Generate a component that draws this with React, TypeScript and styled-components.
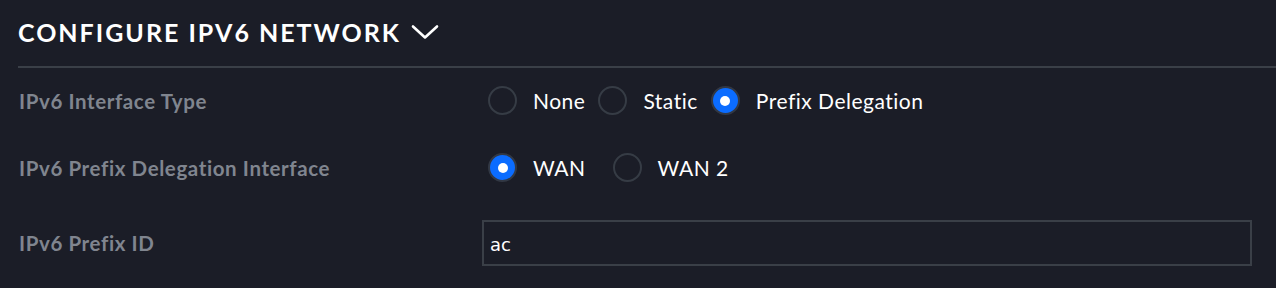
import React from "react";
import styled, { createGlobalStyle } from "styled-components";

const Global = createGlobalStyle`
  html, body { margin: 0; padding: 0; background: #1b1d27; }
  body { font-family: Lato, "Noto Sans", sans-serif; color: #ffffff; }
  * { box-sizing: border-box; }
`;

const Section = styled.section`
  padding: 0 0 0 18px;
  width: 1276px;
  height: 288px;
  overflow: hidden;
`;

const Header = styled.div`
  display: flex;
  align-items: center;
  gap: 10px;
  height: 68px;
  padding-bottom: 2px;
  border-bottom: 2px solid #3a3f47;
`;

const Title = styled.h2`
  margin: 0;
  font-family: Lato, sans-serif;
  font-weight: 700;
  font-size: 25px;
  letter-spacing: 2px;
  text-transform: uppercase;
  color: #ffffff;
`;

const Body = styled.div`
  display: flex;
  flex-direction: column;
  gap: 38px;
  padding-top: 18px;
  padding-right: 24px;
`;

const Row = styled.div`
  display: grid;
  grid-template-columns: 464px 1fr;
  align-items: center;
`;

const Label = styled.div`
  font-family: Lato, sans-serif;
  font-weight: 700;
  font-size: 20.5px;
  letter-spacing: 0.6px;
  color: #80858f;
  padding-left: 1px;
`;

const Group = styled.div<{ $gap: number }>`
  display: flex;
  align-items: center;
  gap: ${(p) => p.$gap}px;
  padding-left: 6px;
`;

const Option = styled.label`
  display: flex;
  align-items: center;
  gap: 16px;
  font-family: Lato, sans-serif;
  font-size: 21px;
  letter-spacing: 0.5px;
  color: #ffffff;
  cursor: pointer;
`;

const Circle = styled.span<{ $on?: boolean }>`
  width: 29px;
  height: 29px;
  border-radius: 50%;
  border: 2px solid ${(p) => (p.$on ? "#323844" : "#363c45")};
  background: ${(p) => (p.$on ? "#0b6cff" : "transparent")};
  display: flex;
  align-items: center;
  justify-content: center;
  &::after {
    content: "";
    display: ${(p) => (p.$on ? "block" : "none")};
    width: 10px;
    height: 10px;
    border-radius: 50%;
    background: #ffffff;
  }
`;

const Input = styled.input`
  width: 770px;
  height: 46px;
  background: transparent;
  border: 2px solid #3a3f47;
  padding: 2px 6px 0;
  font-family: "DejaVu Sans", sans-serif;
  font-size: 18px;
  color: #ffffff;
  outline: none;
`;

const Radio = ({ on, label }: { on?: boolean; label: string }) => (
  <Option>
    <Circle $on={on} />
    {label}
  </Option>
);

export default function App() {
  return (
    <>
      <Global />
      <Section>
        <Header>
          <Title>Configure IPv6 Network</Title>
          <svg width="28" height="16" viewBox="0 0 28 16" fill="none">
            <path d="M2 2.5 L14 13.5 L26 2.5" stroke="#ffffff" strokeWidth="2.6" strokeLinecap="round" strokeLinejoin="round" />
          </svg>
        </Header>
        <Body>
          <Row>
            <Label>IPv6 Interface Type</Label>
            <Group $gap={13}>
              <Radio label="None" />
              <Radio label="Static" />
              <Radio on label="Prefix Delegation" />
            </Group>
          </Row>
          <Row>
            <Label>IPv6 Prefix Delegation Interface</Label>
            <Group $gap={27}>
              <Radio on label="WAN" />
              <Radio label="WAN 2" />
            </Group>
          </Row>
          <Row>
            <Label>IPv6 Prefix ID</Label>
            <Input defaultValue="ac" />
          </Row>
        </Body>
      </Section>
    </>
  );
}
